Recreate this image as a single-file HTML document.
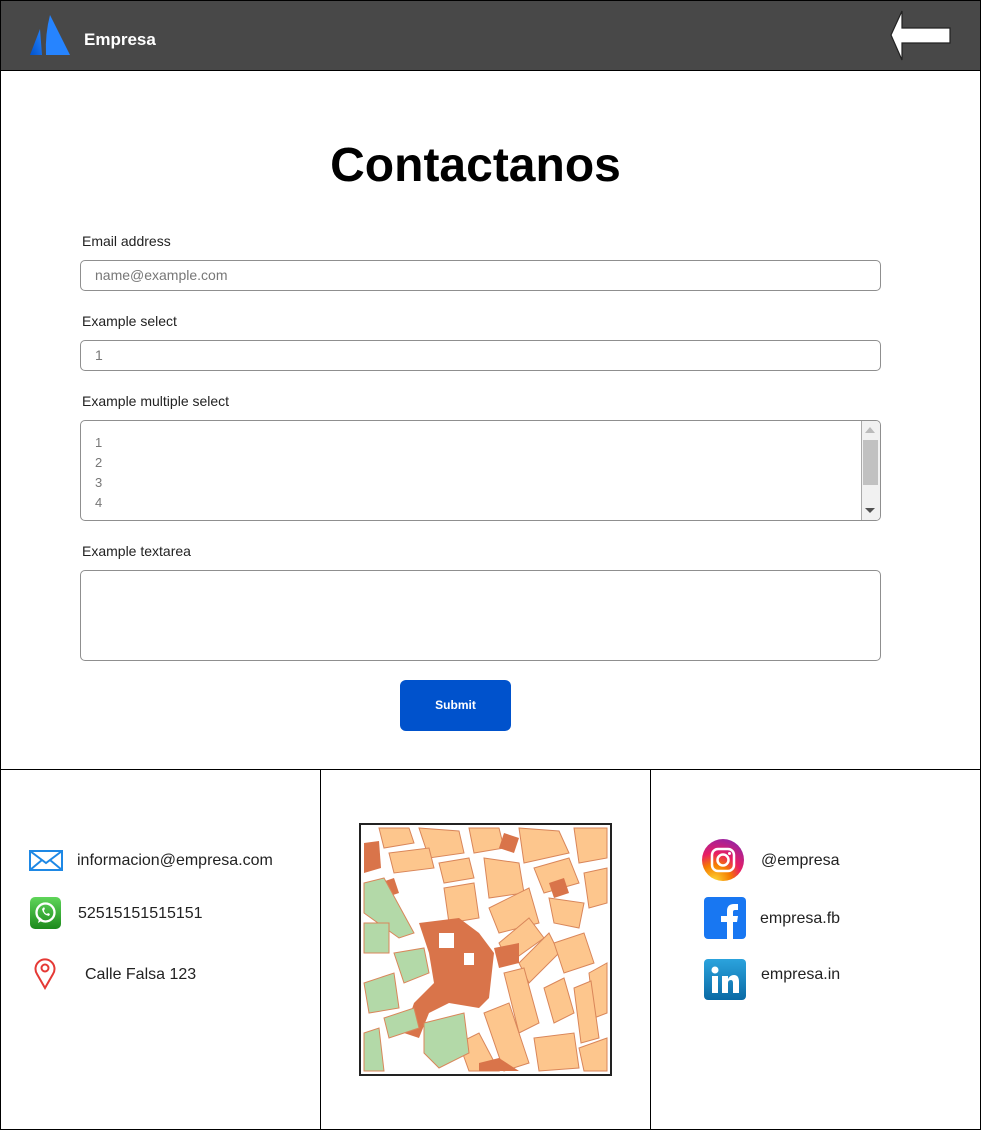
<!DOCTYPE html>
<html><head><meta charset="utf-8"><style>
*{box-sizing:border-box;margin:0;padding:0}
body{width:981px;height:1130px;position:relative;background:#fff;font-family:"Liberation Sans",Arial,sans-serif;overflow:hidden}
.a{position:absolute}
.frame{left:0;top:0;width:981px;height:1130px;border:1px solid #000}
.hdr{left:0;top:0;width:981px;height:71px;background:#484848;border:1px solid #000}
.lbl{font-size:14px;color:#222;left:82px}
.inp{left:80px;width:801px;border:1px solid #8f8f8f;border-radius:5px;background:#fff}
.ph{color:#777;font-size:14px}
.ft{font-size:16px;color:#222}
</style></head><body>
<div class="a frame"></div>
<div class="a hdr"></div>
<svg class="a" style="left:28px;top:14px" width="44" height="42" viewBox="0 0 44 42">
<defs><linearGradient id="g" x1="0" y1="1" x2="1" y2="0"><stop offset="0" stop-color="#0052cc"/><stop offset="1" stop-color="#2684ff"/></linearGradient></defs>
<path d="M12 15 L2 41 L14 41 Z" fill="url(#g)"/>
<path d="M22 1 Q17 20 18 41 L42 41 Z" fill="#2684ff"/>
</svg>
<div class="a" style="left:84px;top:30px;color:#fff;font-weight:bold;font-size:17px">Empresa</div>
<svg class="a" style="left:888px;top:9px" width="66" height="54" viewBox="0 0 66 54">
<path d="M14 2 L3 26 L14 51 L14 34 L62 34 L62 19 L14 19 Z" fill="#fff" stroke="#222" stroke-width="1.2"/>
</svg>
<div class="a" style="left:0;width:951px;top:138px;text-align:center;font-size:48px;font-weight:bold;color:#000">Contactanos</div>

<div class="a lbl" style="top:233px">Email address</div>
<div class="a inp" style="top:260px;height:31px"><span class="a ph" style="left:14px;top:6px">name@example.com</span></div>
<div class="a lbl" style="top:313px">Example select</div>
<div class="a inp" style="top:340px;height:31px"><span class="a ph" style="left:14px;top:6px">1</span></div>
<div class="a lbl" style="top:393px">Example multiple select</div>
<div class="a inp" style="top:420px;height:101px">
<div class="a ph" style="left:14px;top:12px;line-height:20px;font-size:13px">1<br>2<br>3<br>4</div>
<div class="a" style="right:0;top:0;width:19px;height:99px;background:#f1f1f1;border-left:1px solid #aaa;border-radius:0 4px 4px 0"></div>
<div class="a" style="right:2px;top:19px;width:15px;height:45px;background:#c1c1c1"></div>
<div class="a" style="right:5px;top:6px;width:0;height:0;border-left:5px solid transparent;border-right:5px solid transparent;border-bottom:6px solid #bbb"></div>
<div class="a" style="right:5px;top:87px;width:0;height:0;border-left:5px solid transparent;border-right:5px solid transparent;border-top:5px solid #505050"></div>
</div>
<div class="a lbl" style="top:543px">Example textarea</div>
<div class="a inp" style="top:570px;height:91px"></div>
<div class="a" style="left:400px;top:680px;width:111px;height:51px;background:#0052cc;border-radius:6px;color:#fff;font-size:12px;font-weight:bold;text-align:center;line-height:51px">Submit</div>

<div class="a" style="left:0;top:769px;width:981px;height:1px;background:#000"></div>
<div class="a" style="left:320px;top:769px;width:1px;height:361px;background:#000"></div>
<div class="a" style="left:650px;top:769px;width:1px;height:361px;background:#000"></div>

<svg class="a" style="left:29px;top:850px" width="34" height="22" viewBox="0 0 34 22"><rect x="1" y="1" width="32" height="19" fill="#fff" stroke="#1e88e5" stroke-width="2"/><path d="M1 1 L17 13 L33 1 M1 20 L13 10 M33 20 L21 10" fill="none" stroke="#1e88e5" stroke-width="2"/></svg>
<div class="a ft" style="left:77px;top:852px">informacion@empresa.com</div>
<svg class="a" style="left:30px;top:897px" width="31" height="32" viewBox="0 0 31 32"><defs><linearGradient id="w" x1="0" y1="0" x2="0" y2="1"><stop offset="0" stop-color="#5fd55a"/><stop offset="1" stop-color="#1c8a1c"/></linearGradient></defs><rect width="31" height="32" rx="5" fill="url(#w)"/><circle cx="15.5" cy="15.5" r="9" fill="none" stroke="#fff" stroke-width="2.3"/><path d="M8 26 L9.5 20 L13 23 Z" fill="#fff"/><path d="M12 12 Q13 18 19 19 L20 17 L18 16 L17 17 Q14 16 14 13 L15 12 L14 10 Z" fill="#fff"/></svg>
<div class="a ft" style="left:78px;top:905px">52515151515151</div>
<svg class="a" style="left:34px;top:957px" width="22" height="33" viewBox="0 0 22 33"><path d="M11 31 L3 17 A9.5 9.5 0 1 1 19 17 Z" fill="none" stroke="#e53935" stroke-width="2"/><circle cx="11" cy="11" r="3.5" fill="none" stroke="#e53935" stroke-width="2"/></svg>
<div class="a ft" style="left:85px;top:966px">Calle Falsa 123</div>

<svg class="a" style="left:359px;top:823px" width="253" height="253" viewBox="0 0 253 253">
<rect x="1" y="1" width="251" height="251" fill="#fff" stroke="#222" stroke-width="2"/>
<g fill="#fdc68d" stroke="#d9865a" stroke-width="1">
<path d="M20 5 L50 5 L55 20 L25 25Z"/><path d="M60 5 L100 8 L105 30 L70 35Z"/><path d="M110 5 L140 5 L145 25 L115 30Z"/><path d="M160 5 L200 8 L210 30 L165 40Z"/><path d="M215 5 L248 5 L248 35 L220 40Z"/>
<path d="M30 30 L70 25 L75 45 L35 50Z"/><path d="M80 40 L110 35 L115 55 L85 60Z"/><path d="M125 35 L160 40 L165 70 L130 75Z"/><path d="M175 45 L210 35 L220 60 L185 70Z"/><path d="M225 50 L248 45 L248 80 L230 85Z"/>
<path d="M85 65 L115 60 L120 95 L90 100Z"/><path d="M130 85 L170 65 L180 100 L140 110Z"/><path d="M190 75 L225 80 L220 105 L195 100Z"/>
<path d="M140 120 L170 95 L185 115 L150 140Z"/><path d="M160 140 L190 110 L200 130 L170 160Z"/><path d="M195 120 L225 110 L235 140 L205 150Z"/><path d="M230 150 L248 140 L248 190 L235 195Z"/>
<path d="M145 150 L165 145 L180 200 L160 210Z"/><path d="M185 165 L205 155 L215 190 L195 200Z"/><path d="M215 165 L232 158 L240 215 L222 220Z"/>
<path d="M125 190 L150 180 L170 240 L145 248Z"/><path d="M175 215 L215 210 L220 245 L180 248Z"/><path d="M220 225 L248 215 L248 248 L225 248Z"/>
<path d="M100 220 L120 210 L140 248 L110 248Z"/>
</g>
<g fill="#d9744a"><path d="M5 20 L20 18 L22 45 L5 50Z"/><path d="M60 100 L100 95 L120 110 L135 130 L130 175 L120 185 L90 180 L70 190 L60 215 L45 210 L55 180 L75 160 L70 130 Z"/><path d="M145 10 L160 15 L155 30 L140 25Z"/><path d="M190 60 L205 55 L210 70 L195 75Z"/><path d="M135 125 L160 120 L160 140 L140 145Z"/><path d="M20 60 L35 55 L40 70 L25 75Z"/><path d="M120 240 L140 235 L160 248 L120 248Z"/></g>
<g fill="#fff"><rect x="80" y="110" width="15" height="15"/><rect x="105" y="130" width="10" height="12"/></g>
<g fill="#b3d9a8" stroke="#d9865a" stroke-width="1"><path d="M5 60 L25 55 L55 110 L40 115 L5 90Z"/><path d="M5 100 L30 100 L30 130 L5 130Z"/><path d="M35 130 L65 125 L70 150 L45 160Z"/><path d="M5 160 L35 150 L40 185 L10 190Z"/><path d="M25 195 L55 185 L60 205 L30 215Z"/><path d="M65 200 L105 190 L110 230 L80 245 L65 230Z"/><path d="M5 210 L20 205 L25 248 L5 248Z"/></g>
</svg>

<svg class="a" style="left:702px;top:839px" width="42" height="42" viewBox="0 0 42 42"><defs><radialGradient id="ig" cx="0.3" cy="1" r="1.1"><stop offset="0" stop-color="#fdd835"/><stop offset="0.35" stop-color="#f57c00"/><stop offset="0.6" stop-color="#e91e63"/><stop offset="1" stop-color="#8e24aa"/></radialGradient></defs><circle cx="21" cy="21" r="21" fill="url(#ig)"/><rect x="10" y="10" width="22" height="22" rx="6" fill="none" stroke="#fff" stroke-width="2.5"/><circle cx="21" cy="21" r="5.5" fill="none" stroke="#fff" stroke-width="2.5"/><circle cx="27.5" cy="14.5" r="1.5" fill="#fff"/></svg>
<div class="a ft" style="left:761px;top:852px">@empresa</div>
<svg class="a" style="left:704px;top:897px" width="42" height="42" viewBox="0 0 42 42"><rect width="42" height="42" rx="4" fill="#1877f2"/><path d="M23 42 L23 25 L17 25 L17 19 L23 19 L23 14 Q23 7 30 7 L34 7 L34 13 L31 13 Q29 13 29 15 L29 19 L34 19 L33 25 L29 25 L29 42Z" fill="#fff"/></svg>
<div class="a ft" style="left:760px;top:910px">empresa.fb</div>
<svg class="a" style="left:704px;top:959px" width="42" height="41" viewBox="0 0 42 41"><defs><linearGradient id="li" x1="0" y1="0" x2="0" y2="1"><stop offset="0" stop-color="#2ba3dd"/><stop offset="1" stop-color="#0a6aa5"/></linearGradient></defs><rect width="42" height="41" rx="4" fill="url(#li)"/><rect x="8" y="17" width="6" height="17" fill="#fff"/><circle cx="11" cy="11" r="3.5" fill="#fff"/><path d="M18 17 L24 17 L24 20 Q26 16 30 16 Q35 16 35 23 L35 34 L29 34 L29 24 Q29 21 27 21 Q24 21 24 24 L24 34 L18 34Z" fill="#fff"/></svg>
<div class="a ft" style="left:761px;top:966px">empresa.in</div>
</body></html>
